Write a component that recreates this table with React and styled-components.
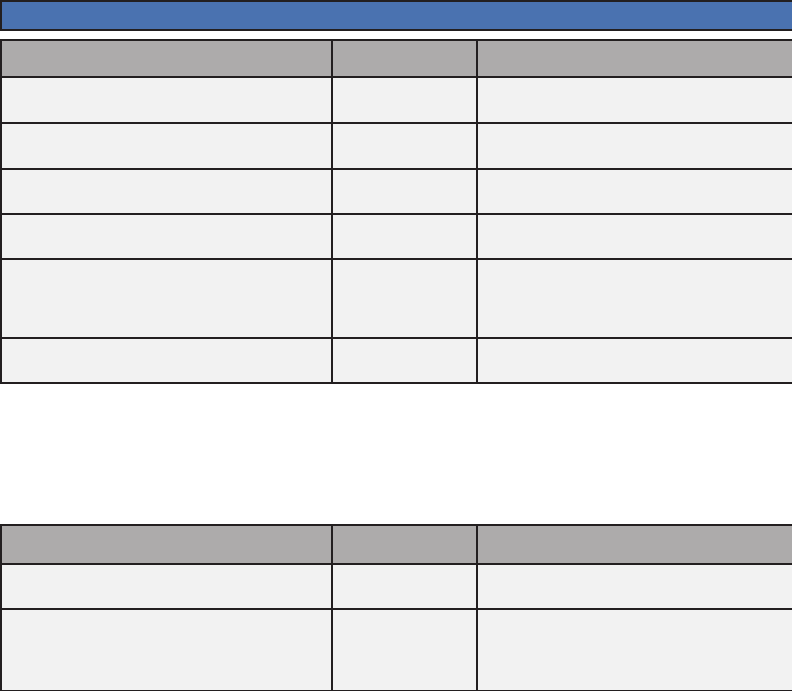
import React from "react";
import styled, { createGlobalStyle } from "styled-components";

const GlobalStyle = createGlobalStyle`
  html, body {
    margin: 0;
    padding: 0;
    background: #ffffff;
    overflow: hidden;
    font-family: "Liberation Sans", Arial, sans-serif;
  }
`;

const LINE = "#231f20";

const firstTable = [35, 44, 44, 43, 43, 77, 43];
const secondTable = [37, 43, 80];

const App = () => {
  return (
    <React.Fragment>
      <GlobalStyle />
      <Page>
        <TitleBar />
        <Table>
          {firstTable.map((h, i) =>
            [0, 1, 2].map((c) => (
              <Cell key={i + "-" + c} $h={h} $head={i === 0} />
            ))
          )}
        </Table>
        <Spacer />
        <Table>
          {secondTable.map((h, i) =>
            [0, 1, 2].map((c) => (
              <Cell key={i + "-" + c} $h={h} $head={i === 0} />
            ))
          )}
        </Table>
      </Page>
    </React.Fragment>
  );
};

const Page = styled.div`
  width: 800px;
  display: flex;
  flex-direction: column;
`;

const TitleBar = styled.div`
  height: 27px;
  background: #4a72b0;
  border: 2px solid ${LINE};
  margin-bottom: 8px;
`;

const Table = styled.div`
  display: grid;
  grid-template-columns: 329px 143px 1fr;
  gap: 2px;
  padding: 2px;
  background: ${LINE};
`;

const Spacer = styled.div`
  height: 140px;
`;

const Cell = styled.div`
  height: ${(p) => p.$h}px;
  background: ${(p) => (p.$head ? "#adabab" : "#f2f2f2")};
`;

export default App;
